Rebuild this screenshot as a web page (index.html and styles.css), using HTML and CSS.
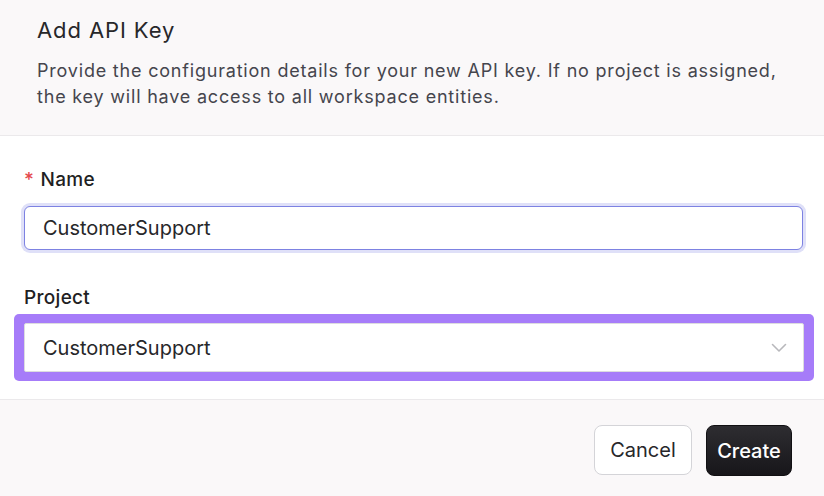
FILE: index.html
```html
<!DOCTYPE html>
<html lang="en">
<head>
    <meta charset="UTF-8">
    <meta name="viewport" content="width=device-width, initial-scale=1.0">
    <title>Add API Key</title>
    <link rel="stylesheet" href="styles.css">
</head>
<body>
    <div class="dialog">
        <div class="dialog-header">
            <h1>Add API Key</h1>
            <p>Provide the configuration details for your new API key. If no project is assigned, the key will have access to all workspace entities.</p>
        </div>

        <div class="dialog-body">
            <div class="field">
                <label class="label"><span class="required">*</span> Name</label>
                <input type="text" class="input focused" value="CustomerSupport">
            </div>

            <div class="field">
                <label class="label">Project</label>
                <!-- purple ring = select is open / highlighted -->
                <div class="select-ring">
                    <div class="select">
                        <span>CustomerSupport</span>
                        <svg width="16" height="10" viewBox="0 0 16 10">
                            <path d="M1.5 1.5 L8 8 L14.5 1.5" fill="none" stroke="#b8b8bc" stroke-width="1.6" stroke-linecap="round" stroke-linejoin="round"/>
                        </svg>
                    </div>
                </div>
            </div>
        </div>

        <div class="dialog-footer">
            <button type="button" class="button button-cancel">Cancel</button>
            <button type="button" class="button button-create">Create</button>
        </div>
    </div>
</body>
</html>
```

FILE: styles.css
```css
body, html {
    margin: 0;
    padding: 0;
    background-color: #ffffff;
    font-family: Inter, "Noto Sans", sans-serif;
    color: #27272a;
}
.dialog {
    width: 824px;
    height: 496px;
    display: flex;
    flex-direction: column;
}
.dialog-header {
    background-color: #faf8f9;
    padding: 16px 37px 25px;
    border-bottom: 1px solid #ebe9eb;
}
.dialog-header h1 {
    margin: 0 0 14px;
    font-size: 22px;
    line-height: 28px;
    font-weight: 400;
    letter-spacing: 0.9px;
    color: #27272a;
}
.dialog-header p {
    margin: 0;
    font-size: 18px;
    line-height: 26px;
    letter-spacing: 0.8px;
    color: #45454d;
}
.dialog-body {
    padding: 32px 21px 18px 24px;
    display: flex;
    flex-direction: column;
    gap: 36px;
}
.field {
    display: flex;
    flex-direction: column;
    gap: 14px;
}
.label {
    font-size: 19px;
    line-height: 24px;
    font-weight: 500;
    letter-spacing: 0.3px;
    color: #1f1f23;
}
.required {
    color: #e5484d;
    margin-right: 1px;
}
.input {
    box-sizing: border-box;
    height: 44px;
    padding: 0 18px;
    font-family: inherit;
    font-size: 20px;
    color: #27272a;
    background: #ffffff;
    border: 1px solid #d4d4d8;
    border-radius: 6px;
    outline: none;
}
.input.focused {
    border-color: #7d82e2;
    box-shadow: 0 0 0 3px #dfe0f8;
}
.select-ring {
    margin: -10px -11px 0 -10px;
    padding: 9px 10px;
    background: #a67cf9;
    border-radius: 5px;
}
.select {
    box-sizing: border-box;
    height: 49px;
    padding: 0 16px 0 18px;
    display: flex;
    align-items: center;
    justify-content: space-between;
    font-size: 20px;
    background: #ffffff;
    border: 1px solid #dcdcdf;
    border-radius: 2px;
}
.dialog-footer {
    flex: 1;
    background-color: #faf8f9;
    border-top: 1px solid #ebe9eb;
    display: flex;
    justify-content: flex-end;
    align-items: flex-start;
    gap: 14px;
    padding: 25px 32px 0;
}
.button {
    height: 50px;
    font-family: inherit;
    font-size: 20px;
    border-radius: 8px;
    cursor: pointer;
}
.button-cancel {
    width: 98px;
    color: #27272a;
    background: #ffffff;
    border: 1px solid #d4d4d8;
}
.button-create {
    width: 86px;
    height: 51px;
    color: #ffffff;
    background: linear-gradient(#2e2d31, #17161a);
    border: 1px solid #111013;
    font-weight: 500;
}
```
